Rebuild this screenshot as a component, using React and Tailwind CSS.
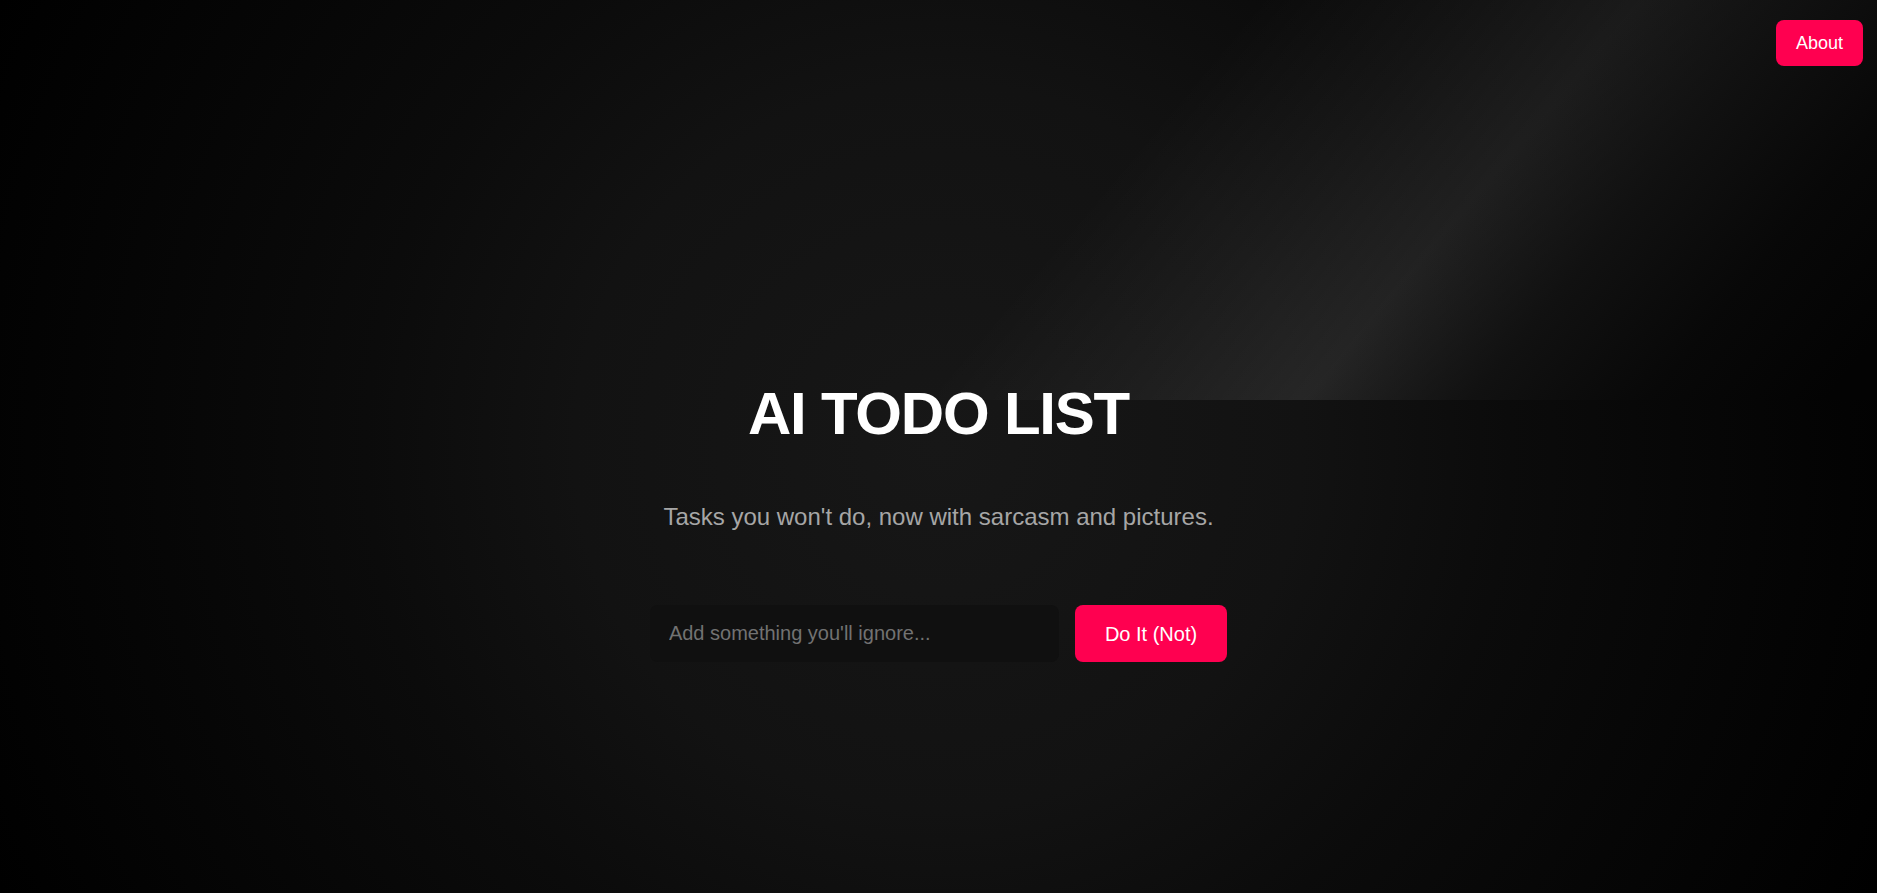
export default function App() {
  return (
    <div
      className="relative min-h-screen w-full overflow-hidden bg-[radial-gradient(circle_at_50%_50%,#171717_0%,#121212_35%,#0b0b0b_55%,#060606_75%,#000000_100%)] font-['Liberation_Sans',Arial,sans-serif]"
    >
      <div className="pointer-events-none absolute top-0 right-0 h-[400px] w-1/2 bg-[linear-gradient(130deg,rgba(255,255,255,0)_25%,rgba(255,255,255,0.045)_41%,rgba(255,255,255,0.085)_55%,rgba(18,18,18,0.9)_68%,rgba(8,8,8,0.95)_82%,rgba(3,3,3,1)_96%)]" />

      <header className="relative flex justify-end pt-5 pr-[14px]">
        <button className="rounded-lg bg-[#ff0050] px-5 py-[9px] text-lg leading-7 text-white">
          About
        </button>
      </header>

      <main className="relative flex flex-col items-center pt-[318px]">
        <h1 className="text-6xl leading-none font-bold tracking-[-1.2px] text-white">
          AI TODO LIST
        </h1>
        <p className="mt-[57px] text-2xl leading-8 text-[#a6a6a6]">
          Tasks you won't do, now with sarcasm and pictures.
        </p>
        <form
          className="mt-[72px] flex gap-4"
          onSubmit={(e) => e.preventDefault()}
        >
          <input
            type="text"
            placeholder="Add something you'll ignore..."
            className="h-[57px] w-[409px] rounded-lg bg-[#101010] px-[19px] text-xl text-white outline-none placeholder:text-[#727272]"
          />
          <button
            type="submit"
            className="h-[57px] rounded-lg bg-[#ff0050] px-[30px] text-xl text-white"
          >
            Do It (Not)
          </button>
        </form>
      </main>
    </div>
  );
}
